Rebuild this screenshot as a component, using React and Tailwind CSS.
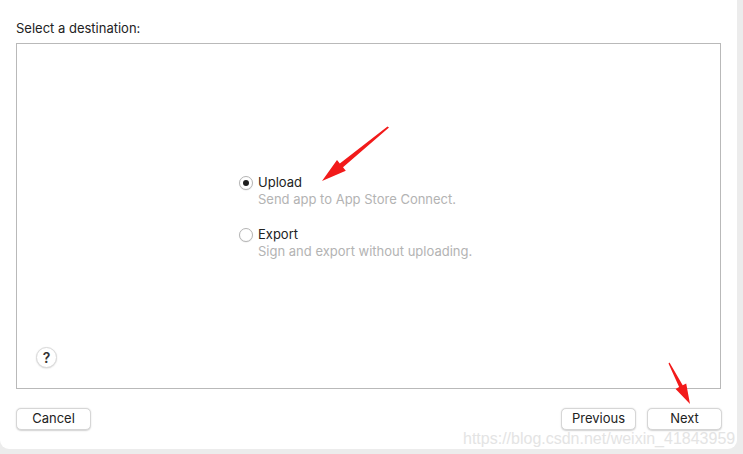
import React from "react";

function Radio({ checked }) {
  return (
    <div className="w-[14px] h-[14px] rounded-full border border-[#b5b5b5] bg-white flex items-center justify-center shadow-[0_0.5px_1px_rgba(0,0,0,0.1)] shrink-0">
      {checked && <div className="w-[6px] h-[6px] rounded-full bg-[#1e1e1e]" />}
    </div>
  );
}

function Btn({ children }) {
  return (
    <div className="w-[75px] h-[22px] rounded-[5px] bg-white border border-[#d6d6d6] shadow-[0_0.5px_1.5px_rgba(0,0,0,0.18)] flex items-center justify-center text-[13px] text-[#222]">
      {children}
    </div>
  );
}

export default function App() {
  return (
    <div className="relative w-[743px] h-[454px] bg-[#ececec] overflow-hidden" style={{ fontFamily: "Inter, 'Liberation Sans', Arial, sans-serif" }}>
      <div className="w-[737px] h-[449px] bg-white rounded-b-[9px] flex flex-col px-4">
        <div className="pt-[20px] h-[43px] text-[13px] text-[#222] leading-[16px]">Select a destination:</div>
        <div className="h-[346px] border border-[#b9b9b9] relative flex flex-col">
          <div className="ml-[222px] mt-[131px] flex flex-col">
            <div className="flex items-center gap-[5px] h-[16px]">
              <Radio checked />
              <span className="text-[13px] text-[#222]">Upload</span>
            </div>
            <div className="ml-[19px] text-[13px] text-[#b3b3b3] h-[16px] leading-[16px]">Send app to App Store Connect.</div>
            <div className="flex items-center gap-[5px] h-[16px] mt-[20px]">
              <Radio />
              <span className="text-[13px] text-[#222]">Export</span>
            </div>
            <div className="ml-[19px] text-[13px] text-[#b3b3b3] h-[16px] leading-[16px]">Sign and export without uploading.</div>
          </div>
          <div className="mt-auto mb-[20px] ml-[19px] w-[21px] h-[21px] rounded-full bg-white border border-[#d9d9d9] shadow-[0_0.5px_1.5px_rgba(0,0,0,0.15)] flex items-center justify-center text-[14px] font-semibold text-[#333]">?</div>
        </div>
        <div className="flex items-center mt-[19px]">
          <Btn>Cancel</Btn>
          <div className="ml-auto flex gap-[11px] mr-[-1px]">
            <Btn>Previous</Btn>
            <Btn>Next</Btn>
          </div>
        </div>
      </div>
      <div className="absolute left-[463px] top-[427px] text-[16px] text-[#e4e4e4]" style={{ fontFamily: "'Liberation Sans', Arial, sans-serif" }}>
        https://blog.csdn.net/weixin_41843959
      </div>
      <svg className="absolute left-0 top-0" width="743" height="454">
        <polygon points="389,127.5 343,167.3 345.8,170.8 322,181 337,160 339.8,163.5 387.5,126.5" fill="#f21a1a" />
        <polygon points="669.5,362.5 682.7,385.3 686.2,383.5 690,404 675.6,388.9 679.1,387.1 668.5,363.5" fill="#f21a1a" />
      </svg>
    </div>
  );
}
